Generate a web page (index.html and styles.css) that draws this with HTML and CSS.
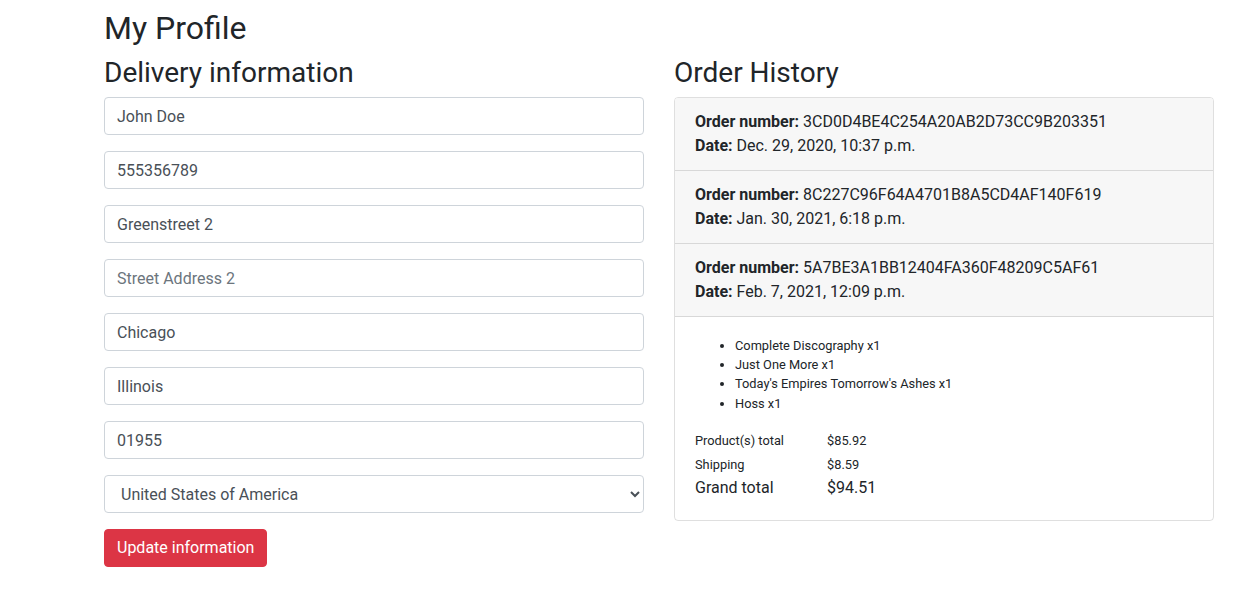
FILE: index.html
```html
<!DOCTYPE html>
<html lang="en">
<head>
<meta charset="utf-8">
<title>My Profile</title>
<link rel="stylesheet" href="styles.css">
</head>
<body>
<main class="page">
  <h2 class="page-title">My Profile</h2>
  <div class="columns">
    <section class="col">
      <h3 class="section-title">Delivery information</h3>
      <form class="form">
        <input class="form-control" type="text" value="John Doe">
        <input class="form-control" type="text" value="555356789">
        <input class="form-control" type="text" value="Greenstreet 2">
        <input class="form-control" type="text" placeholder="Street Address 2">
        <input class="form-control" type="text" value="Chicago">
        <input class="form-control" type="text" value="Illinois">
        <input class="form-control" type="text" value="01955">
        <select class="form-control select">
          <option selected>United States of America</option>
        </select>
        <div><button type="button" class="btn">Update information</button></div>
      </form>
    </section>
    <section class="col">
      <h3 class="section-title">Order History</h3>
      <div class="card">
        <div class="order-item">
          <div><strong>Order number:</strong> 3CD0D4BE4C254A20AB2D73CC9B203351</div>
          <div><strong>Date:</strong> Dec. 29, 2020, 10:37 p.m.</div>
        </div>
        <div class="order-item">
          <div><strong>Order number:</strong> 8C227C96F64A4701B8A5CD4AF140F619</div>
          <div><strong>Date:</strong> Jan. 30, 2021, 6:18 p.m.</div>
        </div>
        <div class="order-item">
          <div><strong>Order number:</strong> 5A7BE3A1BB12404FA360F48209C5AF61</div>
          <div><strong>Date:</strong> Feb. 7, 2021, 12:09 p.m.</div>
        </div>
        <div class="card-body">
          <ul class="products">
            <li>Complete Discography x1</li>
            <li>Just One More x1</li>
            <li>Today's Empires Tomorrow's Ashes x1</li>
            <li>Hoss x1</li>
          </ul>
          <div class="totals">
            <span class="t-small">Product(s) total</span><span class="t-small">$85.92</span>
            <span class="t-small">Shipping</span><span class="t-small">$8.59</span>
            <span class="t-big">Grand total</span><span class="t-big">$94.51</span>
          </div>
        </div>
      </div>
    </section>
  </div>
</main>
</body>
</html>
```
FILE: styles.css
```css
* { box-sizing: border-box; }
html, body { margin: 0; padding: 0; }
body {
  font-family: Roboto, "Liberation Sans", Arial, sans-serif;
  font-size: 16px;
  line-height: 1.5;
  color: #212529;
  background: #fff;
}
.page {
  width: 1110px;
  margin-left: 104px;
  padding-top: 9px;
}
.page-title {
  font-size: 32px;
  font-weight: 400;
  line-height: 1.2;
  margin: 0 0 9px 0;
}
.columns {
  display: grid;
  grid-template-columns: 540px 540px;
  column-gap: 30px;
  align-items: start;
}
.section-title {
  font-size: 28px;
  font-weight: 400;
  line-height: 1.2;
  margin: 0 0 7px 0;
}
.form {
  display: flex;
  flex-direction: column;
  gap: 16px;
}
.form-control {
  display: block;
  width: 100%;
  height: 38px;
  padding: 7px 12px 5px;
  font-family: inherit;
  font-size: 16px;
  line-height: 1.5;
  color: #495057;
  background: #fff;
  border: 1px solid #ced4da;
  border-radius: 4px;
  margin: 0;
}
.form-control::placeholder { color: #6c757d; opacity: 1; }
.select { padding-left: 12px; }
.btn {
  font-family: inherit;
  font-size: 16px;
  line-height: 1.5;
  color: #fff;
  background: #dc3545;
  border: 1px solid #dc3545;
  border-radius: 4px;
  padding: 6px 12px;
  height: 38px;
  cursor: pointer;
}
.card {
  border: 1px solid rgba(0,0,0,.125);
  border-radius: 4px;
  overflow: hidden;
}
.order-item {
  background: #f7f7f7;
  padding: 12px 20px;
  border-bottom: 1px solid rgba(0,0,0,.125);
}
.order-item strong { font-weight: 700; }
.card-body {
  padding: 19px 20px 21px;
}
.products {
  margin: 0 0 16px 0;
  padding-left: 40px;
  font-size: 12.8px;
  line-height: 1.5;
}
.totals {
  display: grid;
  grid-template-columns: 132px auto;
}
.t-small { font-size: 12.8px; line-height: 24px; }
.t-big { font-size: 16px; line-height: 22px; }
```
